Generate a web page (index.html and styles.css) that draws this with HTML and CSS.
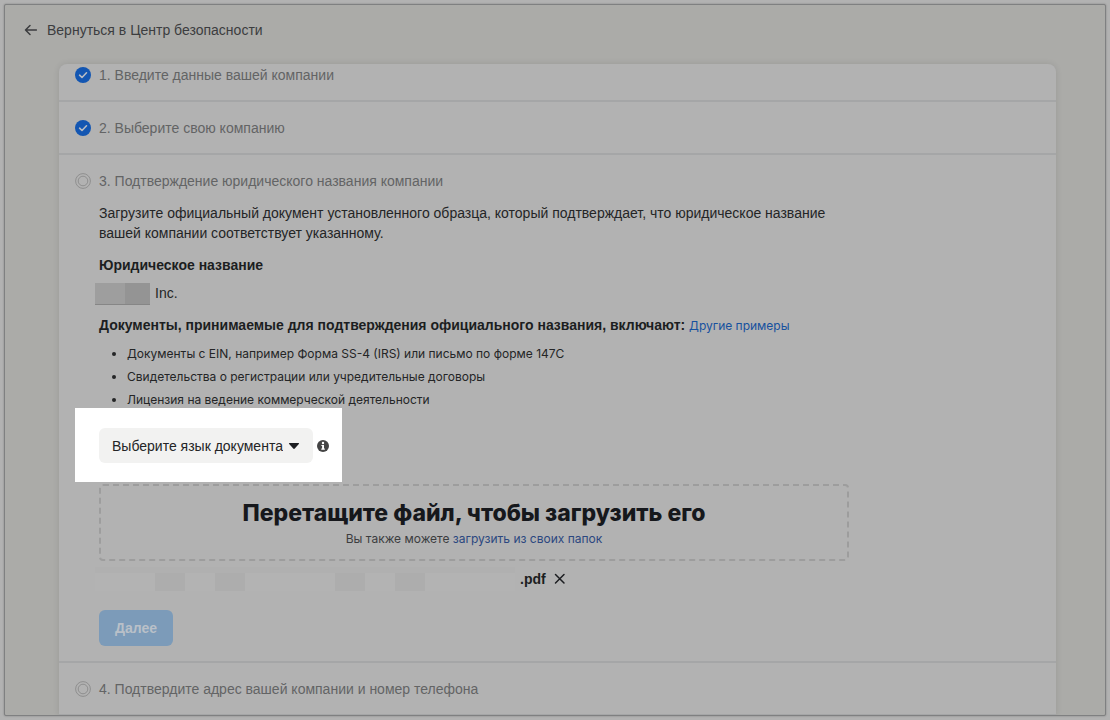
FILE: index.html
```html
<!DOCTYPE html>
<html lang="ru">
  <head>
    <meta charset="UTF-8">
    <title>Подтверждение компании</title>

    <link rel="stylesheet" href="styles.css">
  </head>
  <body>
    <div class="frame">
      <a class="back" href="#">
        <svg width="14" height="12" viewBox="0 0 14 12" fill="none" stroke="currentColor" stroke-width="1.5" stroke-linecap="round" stroke-linejoin="round">
          <path d="M12.4 6H1.5M6 1.5L1.5 6L6 10.5" />
        </svg>
        Вернуться в Центр безопасности
      </a>

      <main class="card">
        <section class="step">
          <h2 class="step-title">
            <svg width="16" height="16" viewBox="0 0 16 16">
              <circle cx="8" cy="8" r="8" fill="#1356b2" />
              <path d="M4.6 8.2L7 10.5L11.5 5.8" fill="none" stroke="#b8bcc4" stroke-width="1.6" stroke-linecap="round" stroke-linejoin="round" />
            </svg>
            1. Введите данные вашей компании
          </h2>
        </section>

        <section class="step">
          <h2 class="step-title">
            <svg width="16" height="16" viewBox="0 0 16 16">
              <circle cx="8" cy="8" r="8" fill="#1356b2" />
              <path d="M4.6 8.2L7 10.5L11.5 5.8" fill="none" stroke="#b8bcc4" stroke-width="1.6" stroke-linecap="round" stroke-linejoin="round" />
            </svg>
            2. Выберите свою компанию
          </h2>
        </section>

        <section class="step">
          <h2 class="step-title">
            <svg width="16" height="16" viewBox="0 0 16 16" fill="none" stroke="#8f8f8f">
              <circle cx="8" cy="8" r="7.4" />
              <circle cx="8" cy="8" r="4.8" />
            </svg>
            3. Подтверждение юридического названия компании
          </h2>

          <div class="step-body">
            <p class="intro">Загрузите официальный документ установленного образца, который подтверждает, что юридическое название вашей компании соответствует указанному.</p>

            <h3 class="label">Юридическое название</h3>
            <p class="company">
              <span class="mask"></span>
              Inc.
            </p>

            <h3 class="label">Документы, принимаемые для подтверждения официального названия, включают: <a class="examples" href="#">Другие примеры</a></h3>
            <ul class="documents">
              <li>Документы с EIN, например Форма SS-4 (IRS) или письмо по форме 147C</li>
              <li>Свидетельства о регистрации или учредительные договоры</li>
              <li>Лицензия на ведение коммерческой деятельности</li>
            </ul>

            <div class="spotlight">
              <div class="picker">
                <select class="language" aria-label="Выберите язык документа">
                  <option>Выберите язык документа</option>
                </select>
                <svg class="caret" width="12" height="8" viewBox="0 0 12 8">
                  <path d="M1.6 1H10.4Q11.6 1 10.8 2L6.8 6.6Q6 7.4 5.2 6.6L1.2 2Q0.4 1 1.6 1Z" fill="#1c1e21" />
                </svg>
              </div>
              <svg width="12" height="12" viewBox="0 0 12 12">
                <circle cx="6" cy="6" r="6" fill="#444" />
                <circle cx="6" cy="3" r="1.2" fill="#fff" />
                <path d="M4.4 4.9H7V8.5H7.8V9.7H4.3V8.5H5.1V6.1H4.4Z" fill="#fff" />
              </svg>
            </div>

            <div class="dropzone">
              <h3 class="dropzone-title">Перетащите файл, чтобы загрузить его</h3>
              <p class="dropzone-hint">Вы также можете <a href="#">загрузить из своих папок</a></p>
            </div>

            <div class="file">
              <div class="file-mask">
                <span></span>
                <span></span>
                <span class="dark"></span>
                <span></span>
                <span class="dark"></span>
                <span></span>
                <span></span>
                <span></span>
                <span class="dark"></span>
                <span></span>
                <span class="dark"></span>
                <span></span>
                <span></span>
                <span></span>
              </div>
              <span class="file-name">.pdf</span>
              <button class="remove" type="button" aria-label="Удалить файл">
                <svg width="12" height="12" viewBox="0 0 12 12" fill="none" stroke="#1c1e21" stroke-width="1.5" stroke-linecap="round">
                  <path d="M1.5 1.5L10 10M10 1.5L1.5 10" />
                </svg>
              </button>
            </div>

            <button class="next" type="button">Далее</button>
          </div>
        </section>

        <section class="step">
          <h2 class="step-title">
            <svg width="16" height="16" viewBox="0 0 16 16" fill="none" stroke="#8f8f8f">
              <circle cx="8" cy="8" r="7.4" />
              <circle cx="8" cy="8" r="4.8" />
            </svg>
            4. Подтвердите адрес вашей компании и номер телефона
          </h2>
        </section>
      </main>
    </div>
  </body>
</html>
```
FILE: styles.css
```css
html {
  box-sizing: border-box;
}

*,
*:before,
*:after {
  box-sizing: inherit;
}

body {
  background: #b2b2b2;
  color: #242526;
  font-family: "Liberation Sans", Arial, sans-serif;
  font-size: 14px;
  line-height: 20px;
  margin: 0;
  padding: 4px;
}

h2,
h3,
p,
ul {
  margin: 0;
}

svg {
  flex-shrink: 0;
}

a {
  text-decoration: none;
}

.frame {
  background: #ababa8;
  border: 1px solid #7f8081;
  border-radius: 2px;
  box-shadow: 0 0 2px rgba(0, 0, 0, 0.3);
  height: calc(100vh - 8px);
  overflow: hidden;
}

.back {
  align-items: center;
  color: #3c3d3f;
  display: flex;
  gap: 9px;
  padding: 15px 19px 24px;
}

/* the list is scrolled a little, so the first step is cut off */
.card {
  background: #b2b2b2;
  border-radius: 8px 8px 0 0;
  box-shadow: 0 0 6px rgba(0, 0, 0, 0.1);
  margin: 0 49px 0 54px;
  overflow: hidden;
}

.step {
  border-bottom: 2px solid #a5a6a7;
  padding: 16px 16px 15px;
}

.step:first-child {
  margin-top: -15px;
}

.step-title {
  align-items: center;
  color: #636465;
  display: flex;
  font-size: 14px;
  font-weight: 400;
  gap: 8px;
}

.step-body {
  padding: 12px 0 0 24px;
}

.intro {
  max-width: 740px;
}

.label {
  color: #1c1e21;
  font-size: 14px;
  margin-top: 12px;
}

.company {
  align-items: center;
  display: flex;
  gap: 5px;
  margin-top: 8px;
}

.mask {
  background: linear-gradient(to right, #9e9e9e 30px, #949494 30px);
  border-bottom: 1px solid #868686;
  height: 22px;
  margin: 0 0 -2px -4px;
  width: 55px;
}

.examples {
  color: #16519f;
  font: 12px/16px Inter, sans-serif;
}

.documents {
  display: grid;
  font: 12px/16px Inter, sans-serif;
  gap: 7px;
  margin-top: 11px;
  padding-left: 28px;
}

.spotlight {
  align-items: center;
  background: #fff;
  display: flex;
  gap: 4px;
  margin-left: -24px;
  padding: 20px 13px 19px 24px;
  width: fit-content;
}

.picker {
  align-items: center;
  display: grid;
}

.language {
  appearance: none;
  background: #f2f2f1;
  border: 0;
  border-radius: 6px;
  color: #242526;
  font: inherit;
  grid-area: 1 / 1;
  height: 35px;
  padding: 0 30px 0 13px;
  width: 214px;
}

.caret {
  grid-area: 1 / 1;
  justify-self: end;
  margin-right: 13px;
  pointer-events: none;
}

.dropzone {
  border: 2px dashed #9d9d9d;
  border-radius: 4px;
  margin-top: 2px;
  max-width: 750px;
  padding: 12px;
  text-align: center;
}

.dropzone-title {
  color: #16181c;
  font: 800 23px/30px Inter, sans-serif;
}

.dropzone-hint {
  color: #3c3d3f;
  font: 12px/16px Inter, sans-serif;
  margin-top: 3px;
}

.dropzone-hint a {
  color: #2b4780;
}

.file {
  align-items: center;
  display: flex;
  gap: 5px;
  margin-top: 6px;
}

.file-mask {
  border-top: 6px solid #b0b0b0;
  display: flex;
  height: 24px;
  margin-left: -4px;
}

.file-mask span {
  background: #b3b3b3;
  width: 30px;
}

.file-mask .dark {
  background: #adadad;
}

.file-name {
  color: #1c1e21;
  font-weight: 700;
}

.remove {
  background: none;
  border: 0;
  display: flex;
  padding: 3px;
}

.next {
  background: #7c9bb9;
  border: 0;
  border-radius: 6px;
  color: #b9c0c8;
  display: block;
  font: 700 14px/20px "Liberation Sans", Arial, sans-serif;
  margin-top: 19px;
  padding: 8px 16px;
}
```
